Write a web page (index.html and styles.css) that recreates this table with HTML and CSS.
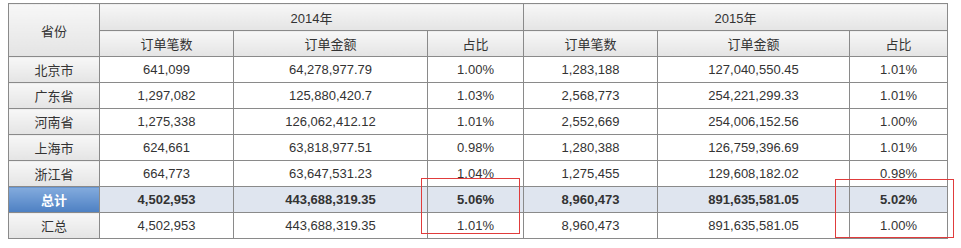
FILE: index.html
```html
<!DOCTYPE html>
<html>
<head>
<meta charset="utf-8">
<link rel="stylesheet" href="styles.css">
</head>
<body>
<div class="wrap">
<table class="grid">
  <colgroup>
    <col class="c-prov"><col class="c-cnt"><col class="c-amt"><col class="c-pct">
    <col class="c-cnt"><col class="c-amt2"><col class="c-pct2">
  </colgroup>
  <thead>
    <tr class="h1">
      <th rowspan="2" class="hd">省份</th>
      <th colspan="3" class="hd">2014年</th>
      <th colspan="3" class="hd">2015年</th>
    </tr>
    <tr class="h2">
      <th class="hd">订单笔数</th><th class="hd">订单金额</th><th class="hd">占比</th>
      <th class="hd">订单笔数</th><th class="hd">订单金额</th><th class="hd">占比</th>
    </tr>
  </thead>
  <tbody>
    <tr><th class="rh">北京市</th><td>641,099</td><td>64,278,977.79</td><td>1.00%</td><td>1,283,188</td><td>127,040,550.45</td><td>1.01%</td></tr>
    <tr><th class="rh">广东省</th><td>1,297,082</td><td>125,880,420.7</td><td>1.03%</td><td>2,568,773</td><td>254,221,299.33</td><td>1.01%</td></tr>
    <tr><th class="rh">河南省</th><td>1,275,338</td><td>126,062,412.12</td><td>1.01%</td><td>2,552,669</td><td>254,006,152.56</td><td>1.00%</td></tr>
    <tr><th class="rh">上海市</th><td>624,661</td><td>63,818,977.51</td><td>0.98%</td><td>1,280,388</td><td>126,759,396.69</td><td>1.01%</td></tr>
    <tr><th class="rh">浙江省</th><td>664,773</td><td>63,647,531.23</td><td>1.04%</td><td>1,275,455</td><td>129,608,182.02</td><td>0.98%</td></tr>
    <tr class="total"><th class="rh-total">总计</th><td>4,502,953</td><td>443,688,319.35</td><td>5.06%</td><td>8,960,473</td><td>891,635,581.05</td><td>5.02%</td></tr>
    <tr><th class="rh">汇总</th><td>4,502,953</td><td>443,688,319.35</td><td>1.01%</td><td>8,960,473</td><td>891,635,581.05</td><td>1.00%</td></tr>
  </tbody>
</table>
<div class="mark mark-a"></div>
<div class="mark mark-b"></div>
</div>
</body>
</html>
```

FILE: styles.css
```css
html, body {
  margin: 0;
  padding: 0;
  background: #ffffff;
}
body {
  padding: 3px 8px 0 8px;
  font-family: "Liberation Sans", Arial, "Noto Sans CJK SC", sans-serif;
  font-size: 13px;
  color: #333333;
}
.wrap {
  position: relative;
  width: 939px;
}
.grid {
  border-collapse: collapse;
  table-layout: fixed;
  width: 939px;
}
.c-prov { width: 91px; }
.c-cnt { width: 134px; }
.c-amt { width: 194px; }
.c-pct { width: 96px; }
.c-amt2 { width: 192px; }
.c-pct2 { width: 98px; }
.grid th, .grid td {
  border: 1px solid #8a8a8a;
  text-align: center;
  padding: 0;
  height: 25px;
  font-weight: normal;
  white-space: nowrap;
}
.grid .h1 th { height: 26px; }
.hd {
  background: linear-gradient(#f7f7f7, #e4e4e4);
}
.rh {
  background: linear-gradient(#f7f7f7, #e4e4e4);
}
.total td {
  background: #dfe5ef;
  font-weight: bold;
}
.grid .rh-total {
  background: linear-gradient(#83abdd, #4d80c3);
  color: #ffffff;
  font-weight: bold;
}
.mark {
  position: absolute;
  border: 1px solid #e03c3c;
  box-sizing: border-box;
}
.mark-a {
  left: 413px;
  top: 175px;
  width: 99px;
  height: 56px;
}
.mark-b {
  left: 827px;
  top: 176px;
  width: 119px;
  height: 59px;
}
```
